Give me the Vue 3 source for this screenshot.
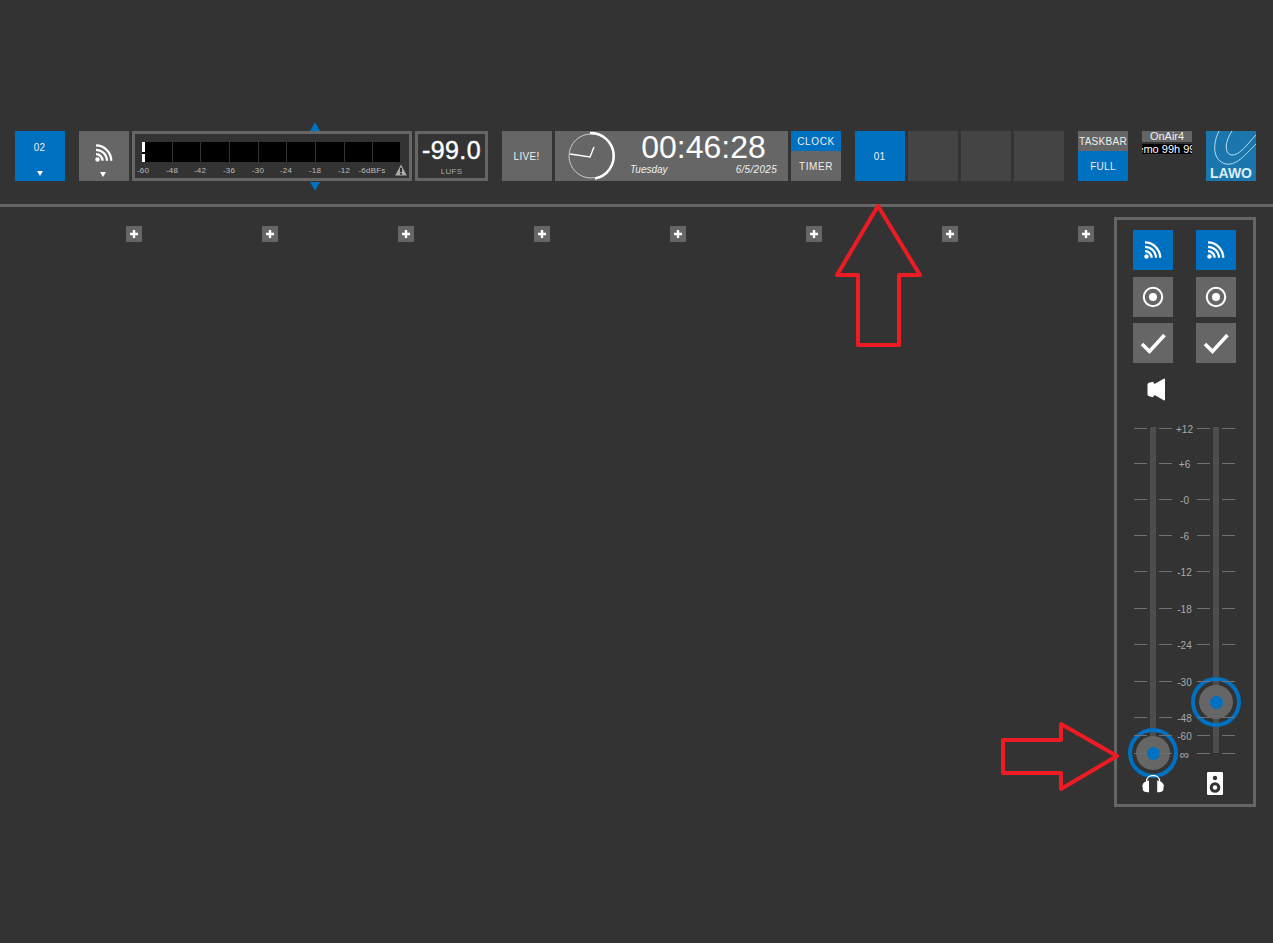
<script setup>
const meterScale = [
  { label: '-60', x: 8 }, { label: '-48', x: 37 }, { label: '-42', x: 65 }, { label: '-36', x: 94 },
  { label: '-30', x: 123 }, { label: '-24', x: 151 }, { label: '-18', x: 180 }, { label: '-12', x: 209 }, { label: '-6dBFs', x: 237 }
]
const meterTicks = [30, 58, 87, 116, 144, 173, 202, 230]
const plusCount = 8
const scale = [
  { label: '+12', y: 8 }, { label: '+6', y: 43 }, { label: '-0', y: 79 }, { label: '-6', y: 115 },
  { label: '-12', y: 151 }, { label: '-18', y: 188 }, { label: '-24', y: 224 }, { label: '-30', y: 261 },
  { label: '-48', y: 297 }, { label: '-60', y: 315 }, { label: '∞', y: 333, wide: true }
]
const tickX = [17, 42, 80, 105]
</script>

<template>
  <div class="page">
    <header class="topbar">
      <button class="tile blue stack">
        <span class="tile-label">02</span>
        <span class="caret"></span>
      </button>

      <div class="group">
        <button class="tile gray stack wifi-tile">
          <svg class="wifi" viewBox="0 0 17 18">
            <circle cx="2.5" cy="15.5" r="2.2" />
            <path d="M1 10.2a6.5 6.5 0 0 1 6.6 6.6M1 5.8a11 11 0 0 1 11 11M1 1.4a15.4 15.4 0 0 1 15.2 15.4" />
          </svg>
          <span class="caret"></span>
        </button>
        <div class="meter">
          <span class="pointer up"></span>
          <span class="pointer down"></span>
          <div class="meter-bar">
            <span class="peak one"></span>
            <span class="peak two"></span>
            <span v-for="t in meterTicks" :key="t" class="meter-tick" :style="{ left: t + 'px' }"></span>
          </div>
          <div class="meter-scale">
            <span v-for="m in meterScale" :key="m.label" class="meter-label" :style="{ left: m.x + 'px' }">{{ m.label }}</span>
            <svg class="warn" viewBox="0 0 12 12">
              <path d="M6 0.5 11.8 11.5H0.2Z" fill="#aaa" />
              <rect x="5.2" y="3.8" width="1.6" height="4.4" fill="#111" />
              <rect x="5.2" y="9" width="1.6" height="1.6" fill="#111" />
            </svg>
          </div>
        </div>
        <div class="lufs">
          <span class="lufs-value">-99.0</span>
          <span class="lufs-unit">LUFS</span>
        </div>
      </div>

      <div class="group">
        <button class="tile gray small-label">LIVE!</button>
        <div class="clock">
          <svg class="dial" viewBox="0 0 50 50">
            <circle cx="25" cy="25" r="22" fill="none" stroke="#ccc" stroke-width="1" />
            <path d="M24 2A23 23 0 0 1 29 47.6" fill="none" stroke="#fff" stroke-width="2.4" />
            <path d="M4 23 24 26 28 16" fill="none" stroke="#fff" stroke-width="1.4" />
          </svg>
          <div class="clock-info">
            <div class="time">00:46:28</div>
            <div class="date-row">
              <span>Tuesday</span>
              <span class="date">6/5/2025</span>
            </div>
          </div>
        </div>
        <div class="split">
          <span class="split-top blue">CLOCK</span>
          <span class="split-bottom gray">TIMER</span>
        </div>
      </div>

      <div class="group">
        <button class="tile blue small-label">01</button>
        <button class="tile empty"></button>
        <button class="tile empty"></button>
        <button class="tile empty"></button>
      </div>

      <div class="split tight">
        <span class="split-top gray">TASKBAR</span>
        <span class="split-bottom blue">FULL</span>
      </div>

      <div class="onair">
        <span class="onair-name">OnAir4</span>
        <span class="onair-demo"><span>Demo 99h 99m</span></span>
      </div>

      <div class="logo">
        <svg class="logo-art" viewBox="0 0 50 50">
          <path d="M13 0C6 14 7 30 20 33 32 35 42 20 50 13" fill="none" stroke="#bcdcee" stroke-width="1" />
          <path d="M26 0C19 10 18 22 25 24 34 25 42 12 50 4" fill="none" stroke="#bcdcee" stroke-width="1" />
        </svg>
        <span class="logo-text">LAWO</span>
      </div>
    </header>

    <div class="divider"></div>

    <main class="workspace">
      <div class="plus-row">
        <span v-for="n in plusCount" :key="n" class="plus">
          <svg viewBox="0 0 16 16"><path d="M8 4v8M4 8h8" stroke="#fff" stroke-width="2.4" /></svg>
        </span>
      </div>

      <aside class="panel">
        <div class="panel-buttons">
          <button v-for="n in 2" :key="'w' + n" class="square blue">
            <svg class="wifi nudged" viewBox="0 0 17 18">
              <circle cx="2.5" cy="15.5" r="2.2" />
              <path d="M1 10.2a6.5 6.5 0 0 1 6.6 6.6M1 5.8a11 11 0 0 1 11 11M1 1.4a15.4 15.4 0 0 1 15.2 15.4" />
            </svg>
          </button>
          <button v-for="n in 2" :key="'r' + n" class="square gray">
            <svg class="glyph nudged" viewBox="0 0 24 24">
              <circle cx="12" cy="12" r="9.2" fill="none" stroke="#fff" stroke-width="2" />
              <circle cx="12" cy="12" r="4" fill="#fff" />
            </svg>
          </button>
          <button v-for="n in 2" :key="'c' + n" class="square gray">
            <svg class="glyph check nudged" viewBox="0 0 28 24">
              <path d="M3 13 10.5 20.5 25.5 4" fill="none" stroke="#fff" stroke-width="3.6" />
            </svg>
          </button>
        </div>

        <svg class="mute" viewBox="0 0 18 23">
          <path d="M0.5 6.5Q0.5 5.2 2 4.8L6 3.8 7.5 6 17.2 0.5 18 1V22L17.2 22.5 7.5 17 6 19.2 2 18.2Q0.5 17.8 0.5 16.5Z" fill="#fff" />
        </svg>

        <div class="faders">
          <span class="track first"></span>
          <span class="track second"></span>
          <span class="knob left-knob"><span class="knob-body"><span class="knob-dot"></span></span></span>
          <span class="knob right-knob"><span class="knob-body"><span class="knob-dot"></span></span></span>
          <template v-for="row in scale" :key="row.label">
            <span v-for="x in tickX" :key="x" class="tick" :style="{ left: x + 'px', top: row.y + 'px' }"></span>
            <span class="scale-label" :class="{ wide: row.wide }" :style="{ top: row.y - 5 + 'px' }">{{ row.label }}</span>
          </template>

          <svg class="phones" viewBox="0 0 24 21">
            <path d="M4.5 8.5C4.5 0.5 17.7 0.5 17.7 8.5" fill="none" stroke="#fff" stroke-width="1.3" />
            <path d="M7 7.5V19.2Q2.5 19.8 1 17.5L0.4 12.5Q1 8.5 7 7.5Z" fill="#fff" />
            <path d="M15.2 7.5V19.2Q19.7 19.8 21.2 17.5L21.8 12.5Q21.2 8.5 15.2 7.5Z" fill="#fff" />
          </svg>
          <svg class="box-speaker" viewBox="0 0 16 23">
            <rect width="16" height="23" rx="1.2" fill="#fff" />
            <circle cx="8" cy="6" r="2.2" fill="#333" />
            <circle cx="8" cy="15.5" r="5.3" fill="#333" />
            <circle cx="8" cy="15.5" r="2.2" fill="#fff" />
          </svg>
        </div>
      </aside>
    </main>

    <svg class="annotations" viewBox="0 0 1273 943">
      <path d="M878 206 837 275H858V345H899V275H920Z" />
      <path d="M1003 740H1061V724L1117 756 1061 789V773H1003Z" />
    </svg>
  </div>
</template>

<style scoped>
.page {
  position: relative;
  width: 1273px;
  height: 943px;
  overflow: hidden;
  background: #333;
  color: #eee;
  font-family: "Liberation Sans", Arial, sans-serif;
}
button {
  border: 0;
  padding: 0;
  color: inherit;
  font: inherit;
}
.blue { background: #0070c0; }
.gray { background: #666; }

.topbar {
  display: flex;
  gap: 14px;
  height: 50px;
  padding: 131px 0 23px 15px;
}
.group {
  display: flex;
  gap: 3px;
}
.tile {
  flex: none;
  width: 50px;
  height: 50px;
}
.empty { background: #444; }
.small-label {
  padding-right: 1px;
  font-size: 10px;
  letter-spacing: 0.3px;
}
.stack {
  position: relative;
  display: block;
}
.tile-label {
  position: absolute;
  left: 0;
  width: 49px;
  top: 11px;
  font-size: 10px;
  line-height: 12px;
  text-align: center;
  letter-spacing: 0.3px;
}
.caret {
  position: absolute;
  left: 22px;
  top: 40px;
  width: 0;
  height: 0;
  border-left: 3.5px solid transparent;
  border-right: 3.5px solid transparent;
  border-top: 5px solid #fff;
}
.wifi-tile .caret { left: 21px; top: 41px; }
.wifi {
  display: block;
  width: 17px;
  height: 18px;
  fill: #fff;
  overflow: visible;
}
.wifi path {
  fill: none;
  stroke: #fff;
  stroke-width: 2.3;
}
.wifi-tile .wifi {
  position: absolute;
  left: 16px;
  top: 13px;
}

.meter {
  position: relative;
  box-sizing: border-box;
  width: 280px;
  height: 50px;
  border: 3px solid #666;
}
.pointer {
  position: absolute;
  left: 175px;
  width: 0;
  height: 0;
  border-left: 5px solid transparent;
  border-right: 5px solid transparent;
}
.pointer.up {
  top: -12px;
  border-bottom: 9px solid #0070c0;
}
.pointer.down {
  bottom: -13px;
  border-top: 9px solid #0070c0;
}
.meter-bar {
  position: relative;
  width: 258px;
  height: 20px;
  margin: 8px 0 0 7px;
  background: #000;
}
.peak {
  position: absolute;
  left: 0;
  width: 3px;
  background: #fff;
}
.peak.one { top: 0; height: 10px; }
.peak.two { top: 12px; height: 8px; }
.meter-tick {
  position: absolute;
  top: 0;
  width: 1px;
  height: 20px;
  background: #333;
}
.meter-scale {
  position: relative;
  height: 16px;
}
.meter-label {
  position: absolute;
  top: 4px;
  transform: translateX(-50%);
  font-size: 8px;
  line-height: 10px;
  letter-spacing: 0.2px;
  color: #bbb;
  white-space: nowrap;
}
.warn {
  position: absolute;
  left: 260px;
  top: 2px;
  width: 12px;
  height: 12px;
}

.lufs {
  box-sizing: border-box;
  width: 73px;
  height: 50px;
  border: 3px solid #666;
  text-align: center;
}
.lufs-value {
  display: block;
  margin-top: 3px;
  font-size: 25px;
  line-height: 26px;
  letter-spacing: 0.4px;
  color: #fff;
  -webkit-text-stroke: 0.4px #fff;
}
.lufs-unit {
  display: block;
  margin-top: 4px;
  font-size: 8px;
  line-height: 10px;
  letter-spacing: 0.3px;
  color: #aaa;
}

.clock {
  display: flex;
  width: 233px;
  height: 50px;
  background: #666;
}
.dial {
  flex: none;
  width: 50px;
  height: 50px;
  margin-left: 11px;
}
.clock-info {
  width: 147px;
  margin-left: 14px;
}
.time {
  font-size: 32px;
  line-height: 32px;
  text-align: center;
  color: #fff;
}
.date-row {
  display: flex;
  justify-content: space-between;
  margin-top: 1px;
  font-size: 10px;
  font-style: italic;
  line-height: 12px;
}
.date {
  letter-spacing: 0.3px;
}
.split {
  display: flex;
  flex: none;
  flex-direction: column;
  width: 50px;
  height: 50px;
  font-size: 10px;
  letter-spacing: 0.6px;
  text-align: center;
}
.split.tight { letter-spacing: 0.3px; }
.split-top {
  height: 20px;
  line-height: 21px;
}
.split-bottom {
  height: 30px;
  line-height: 32px;
}

.onair {
  display: flex;
  flex: none;
  flex-direction: column;
  width: 50px;
  font-size: 11px;
}
.onair-name {
  height: 11px;
  line-height: 11px;
  background: #666;
  text-align: center;
}
.onair-demo {
  display: flex;
  justify-content: center;
  height: 10px;
  margin-top: 2px;
  overflow: hidden;
  background: #000;
  color: #fff;
  line-height: 10px;
  white-space: nowrap;
}
.onair-demo span { flex: none; }

.logo {
  position: relative;
  flex: none;
  width: 50px;
  height: 50px;
  overflow: hidden;
  background: #1a76ac;
}
.logo-art {
  position: absolute;
  left: 0;
  top: 0;
  width: 50px;
  height: 50px;
}
.logo-text {
  position: absolute;
  left: 0;
  right: 0;
  top: 35px;
  font-size: 14px;
  font-weight: 700;
  line-height: 15px;
  text-align: center;
  color: #dcedf6;
}

.divider {
  height: 3px;
  background: #666;
}

.workspace {
  display: flex;
  align-items: flex-start;
  gap: 20px;
  padding-left: 126px;
}
.plus-row {
  display: flex;
  gap: 120px;
  margin-top: 19px;
}
.plus {
  display: block;
  width: 16px;
  height: 16px;
  background: #666;
}
.plus svg {
  display: block;
  width: 16px;
  height: 16px;
}

.panel {
  box-sizing: border-box;
  display: flex;
  flex-direction: column;
  width: 142px;
  height: 590px;
  margin-top: 10px;
  border: 3px solid #666;
}
.panel-buttons {
  display: grid;
  grid-template-columns: 40px 40px;
  grid-auto-rows: 40px;
  column-gap: 23px;
  row-gap: 6.5px;
  padding: 10px 0 0 16px;
}
.square {
  display: flex;
  align-items: center;
  justify-content: center;
}
.nudged { margin-right: 1px; }
.glyph {
  display: block;
  width: 24px;
  height: 24px;
}
.check {
  width: 28px;
  height: 24px;
}
.mute {
  display: block;
  width: 18px;
  height: 23px;
  margin: 15px 0 0 30px;
}

.faders {
  position: relative;
  flex: 1;
  margin-top: 19px;
}
.track {
  position: absolute;
  top: 7px;
  width: 6px;
  height: 326px;
  background: #4d4d4d;
}
.track.first { left: 33px; }
.track.second { left: 96px; }
.tick {
  position: absolute;
  width: 13px;
  height: 1px;
  background: #707070;
}
.scale-label {
  position: absolute;
  left: 48px;
  width: 39px;
  font-size: 10px;
  line-height: 13px;
  text-align: center;
  color: #aaa;
}
.scale-label.wide {
  font-size: 13px;
}
.knob {
  position: absolute;
  box-sizing: border-box;
  display: flex;
  align-items: center;
  justify-content: center;
  width: 50px;
  height: 50px;
  border: 4px solid #0070c0;
  border-radius: 50%;
}
.left-knob { left: 11px; top: 308px; }
.right-knob { left: 74px; top: 257px; }
.knob-body {
  display: flex;
  flex: none;
  align-items: center;
  justify-content: center;
  width: 34px;
  height: 34px;
  border-radius: 50%;
  background: #666;
}
.knob-dot {
  width: 13px;
  height: 13px;
  border-radius: 50%;
  background: #0070c0;
}
.phones {
  position: absolute;
  left: 25px;
  top: 353px;
  width: 24px;
  height: 21px;
}
.box-speaker {
  position: absolute;
  left: 90px;
  top: 352px;
  width: 16px;
  height: 23px;
}

.annotations {
  position: absolute;
  left: 0;
  top: 0;
  width: 1273px;
  height: 943px;
  pointer-events: none;
}
.annotations path {
  fill: none;
  stroke: #ed1c24;
  stroke-width: 4;
  stroke-linejoin: round;
}
</style>
